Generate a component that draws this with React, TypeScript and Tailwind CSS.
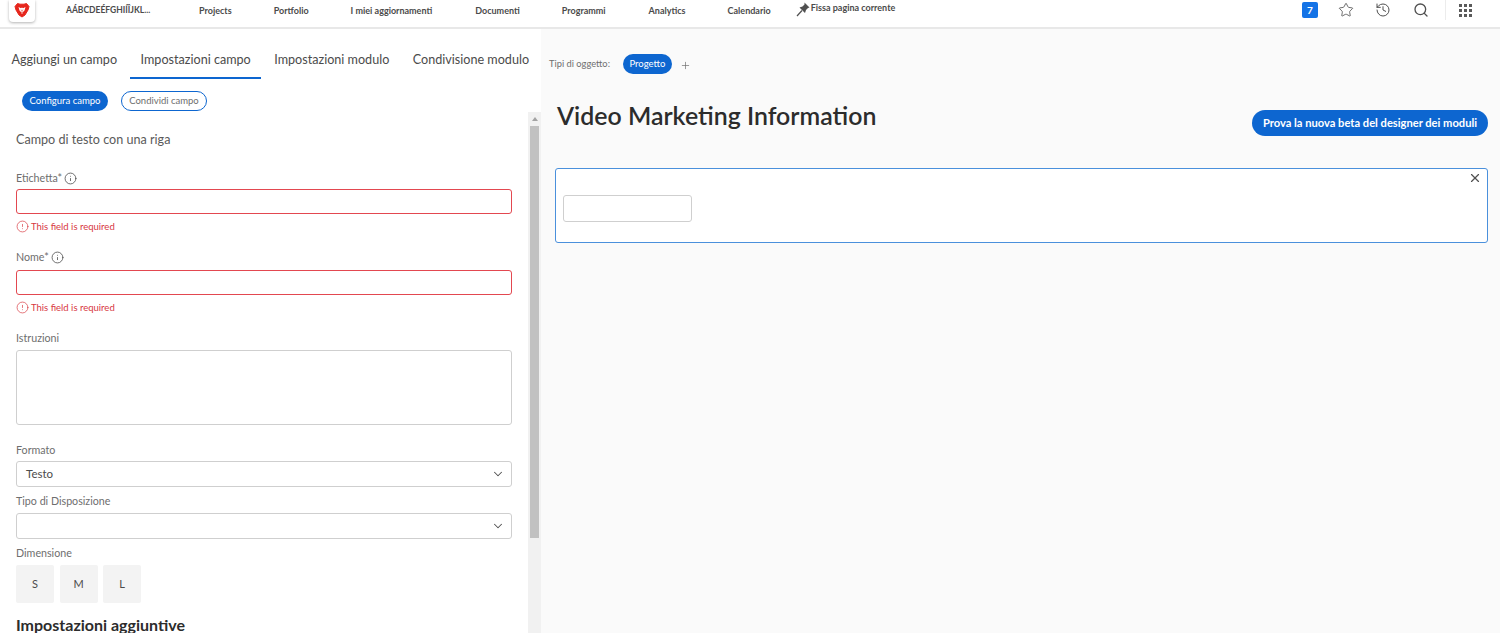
import React from 'react';
import { ChevronDown, Search, Star, History, Plus, X, Info, AlertCircle } from 'lucide-react';

const navItems = [
  { label: 'Projects', className: 'ml-[48px]' },
  { label: 'Portfolio', className: 'ml-[42px]' },
  { label: 'I miei aggiornamenti', className: 'ml-[42px]' },
  { label: 'Documenti', className: 'ml-[43px]' },
  { label: 'Programmi', className: 'ml-[42px]' },
  { label: 'Analytics', className: 'ml-[43px]' },
  { label: 'Calendario', className: 'ml-[42px]' },
];

const tabs = ['Aggiungi un campo', 'Impostazioni campo', 'Impostazioni modulo', 'Condivisione modulo'];

const Logo = () => (
  <svg width="16" height="16" viewBox="0 0 16 16">
    <path d="M3.5 1.5 L6 2.2 H10 L12.5 1.5 L15 4.5 L14 8 L11 13 L8 15 L5 13 L2 8 L1 4.5 Z" fill="#e6261c" stroke="#e6261c" strokeLinejoin="round" />
    <path d="M4.5 5 L7 6.2 L8 5.6 L9 6.2 L11.5 5 L10.5 8.5 L9 10 H7 L5.5 8.5 Z" fill="#fff" />
    <path d="M6.6 7.2 L7.4 7.6 L8 9 L8.6 7.6 L9.4 7.2 L8.8 9.6 H7.2 Z" fill="#f08a80" />
    <path d="M7 10.5 H9 L8 12 Z" fill="#fff" />
  </svg>
);

const PinIcon = () => (
  <svg width="14" height="15" viewBox="0 0 14 15">
    <path d="M8.5 .5 L13.5 5.5 L12 6 L10 8 L9 11 L3.5 5.5 L6.5 4.5 L8.5 2.5 Z" fill="#505050" />
    <path d="M6 8.5 L1 14" stroke="#505050" strokeWidth="1.2" fill="none" />
  </svg>
);

const Label = ({ text, info }: { text: string; info?: boolean }) => (
  <div className="flex items-center gap-[2px] text-[10.7px] leading-[14px] text-[#6e6e6e]">
    <span>{text}</span>
    {info && <Info size={13} strokeWidth={1.5} className="text-[#505050]" />}
  </div>
);

const RequiredError = () => (
  <div className="mt-[6px] flex items-center gap-[2px] text-[9.5px] leading-[13px] text-[#d7373f]">
    <AlertCircle size={13} strokeWidth={1.25} />
    <span>This field is required</span>
  </div>
);

const SelectBox = ({ value }: { value?: string }) => (
  <div className="flex h-[26px] w-[496px] items-center justify-between rounded-[3px] border border-[#cfcfcf] bg-white pl-[9px] pr-[6px] text-[11.5px] text-[#4b4b4b]">
    <span>{value}</span>
    <ChevronDown size={14} strokeWidth={1.75} className="text-[#505050]" />
  </div>
);

export default function App() {
  return (
    <div className="flex h-[633px] w-[1500px] flex-col overflow-hidden bg-white font-['Lato',sans-serif]">
      <header className="flex h-[29px] shrink-0 items-start border-b-2 border-[#e8e8e8] bg-white">
        <div className="ml-[9px] flex h-[22px] w-[26px] items-center justify-center rounded-b-[4px] bg-white pb-[2px] shadow-[0_1px_3px_rgba(0,0,0,0.3)]">
          <Logo />
        </div>
        <nav className="flex h-[21px] items-center text-[9px] font-bold text-[#4b4b4b]">
          <span className="ml-[31px] w-[85px] whitespace-nowrap text-[8.5px]">AÁBCDEÉFGHIÍÎJKL...</span>
          {navItems.map((item) => (
            <span key={item.label} className={item.className}>{item.label}</span>
          ))}
          <span className="ml-[25px] flex items-center gap-[1px] pb-[3px]">
            <PinIcon />
            <span className="pb-[3px]">Fissa pagina corrente</span>
          </span>
        </nav>
        <div className="ml-auto flex h-[20px] items-center text-[#505050]">
          <div className="flex h-[16px] w-[16px] items-center justify-center rounded-[2px] bg-[#1473e6] text-[10px] font-bold text-white">7</div>
          <Star size={16} strokeWidth={1.25} className="ml-[20px]" />
          <History size={16} strokeWidth={1.5} className="ml-[21px]" />
          <Search size={16} strokeWidth={2} className="ml-[22px]" />
          <div className="ml-[16px] h-[20px] w-px bg-[#ececec]" />
          <div className="ml-[13px] mr-[28px] grid grid-cols-3 gap-[2px]">
            {Array.from({ length: 9 }).map((_, i) => (
              <span key={i} className="h-[3px] w-[3px] bg-[#5a5a5a]" />
            ))}
          </div>
        </div>
      </header>

      <div className="flex min-h-0 flex-1">
        <aside className="flex w-[541px] shrink-0 flex-col">
          <div className="flex h-[50px] w-[541px] shrink-0 items-end gap-[2.5px] pl-[1px] text-[12.6px] text-[#4b4b4b]">
            {tabs.map((tab) => (
              <span
                key={tab}
                className={`h-[41px] whitespace-nowrap px-[10.5px] pt-[14px] leading-[16px] ${tab === 'Impostazioni campo' ? 'border-b-2 border-[#0d66d0]' : ''}`}
              >
                {tab}
              </span>
            ))}
          </div>
          <div className="flex h-[33px] shrink-0 items-start gap-[13px] pl-[22px] pt-[12px] text-[9.5px]">
            <span className="flex h-[20px] w-[86px] items-center justify-center rounded-full bg-[#0d66d0] text-white">Configura campo</span>
            <span className="flex h-[20px] w-[86px] items-center justify-center rounded-full border border-[#0d66d0] text-[#6e6e6e]">Condividi campo</span>
          </div>
          <div className="flex min-h-0 flex-1">
            <div className="w-[528px] pl-[16px] pt-[20px]">
              <p className="text-[12.6px] leading-[16px] text-[#5a5a5a]">Campo di testo con una riga</p>
              <div className="mt-[23px]">
                <Label text="Etichetta*" info />
                <div className="mt-[4px] h-[25px] w-[496px] rounded-[3px] border border-[#e34850] bg-white" />
                <RequiredError />
              </div>
              <div className="mt-[17px]">
                <Label text="Nome*" info />
                <div className="mt-[6px] h-[25px] w-[496px] rounded-[3px] border border-[#e34850] bg-white" />
                <RequiredError />
              </div>
              <div className="mt-[17px]">
                <Label text="Istruzioni" />
                <div className="mt-[5px] h-[75px] w-[496px] rounded-[3px] border border-[#cfcfcf] bg-white" />
              </div>
              <div className="mt-[18px]">
                <Label text="Formato" />
                <div className="mt-[4px]"><SelectBox value="Testo" /></div>
              </div>
              <div className="mt-[7px]">
                <Label text="Tipo di Disposizione" />
                <div className="mt-[5px]"><SelectBox /></div>
              </div>
              <div className="mt-[7px]">
                <Label text="Dimensione" />
                <div className="mt-[5px] flex gap-[5.5px]">
                  {['S', 'M', 'L'].map((size) => (
                    <div key={size} className="flex h-[38px] w-[38px] items-center justify-center rounded-[2px] bg-[#f3f3f3] text-[11px] text-[#4b4b4b]">{size}</div>
                  ))}
                </div>
              </div>
              <h3 className="mt-[12px] text-[16px] font-bold leading-[20px] text-[#2c2c2c]">Impostazioni aggiuntive</h3>
            </div>
            <div className="flex w-[13px] shrink-0 flex-col bg-[#f1f1f1] px-[2px]">
              <div className="flex h-[14px] shrink-0 items-center justify-center">
                <div className="h-0 w-0 border-x-[3.5px] border-b-[4px] border-x-transparent border-b-[#a3a3a3]" />
              </div>
              <div className="h-[412px] bg-[#c1c1c1]" />
            </div>
          </div>
        </aside>

        <main className="min-w-0 flex-1 bg-[#fafafa]">
          <div className="flex h-[45px] items-end pl-[8px] text-[9.3px] text-[#6e6e6e]">
            <span className="mb-[3px]">Tipi di oggetto:</span>
            <span className="ml-[13px] flex h-[20px] w-[49px] items-center justify-center rounded-full bg-[#0d66d0] text-[9.5px] text-white">Progetto</span>
            <Plus size={11} strokeWidth={1.5} className="ml-[8px] mb-[3px]" />
          </div>
          <div className="mt-[25px] flex h-[69px] items-start justify-between pl-[16px] pr-[12px]">
            <h1 className="text-[24.9px] font-semibold leading-[32px] text-[#2c2c2c]">Video Marketing Information</h1>
            <button className="mt-[11px] flex h-[26px] w-[236px] items-center justify-center rounded-full bg-[#0d66d0] text-[11.15px] font-bold text-white">
              Prova la nuova beta del designer dei moduli
            </button>
          </div>
          <section className="relative ml-[14px] mr-[12px] h-[75px] rounded-[3px] border border-[#4a90dc] bg-white pl-[7px] pt-[26px]">
            <div className="h-[27px] w-[129px] rounded-[3px] border border-[#cfcfcf] bg-white" />
            <X size={14} strokeWidth={2} className="absolute right-[5px] top-[2px] text-[#505050]" />
          </section>
        </main>
      </div>
    </div>
  );
}
